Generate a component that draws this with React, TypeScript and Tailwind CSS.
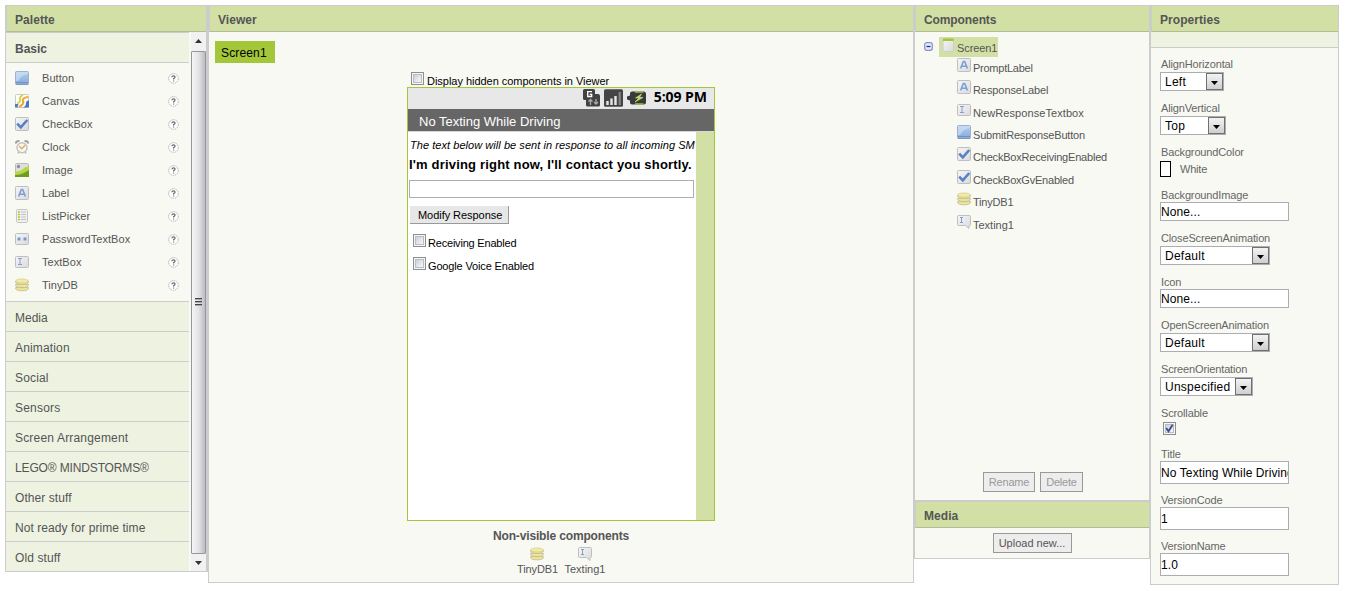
import React from "react";

type IconName = "button" | "canvas" | "checkbox" | "clock" | "image" | "label" | "list" | "password" | "textbox" | "db" | "texting" | "screen";

function Icon({ name, className = "" }: { name: IconName; className?: string }) {
  const plate = (y: number, h: number) => (
    <rect x=".5" y={y + 0.5} width="13" height={h - 1} rx="1" fill="url(#plate)" stroke="#bfbfc2" />
  );
  return (
    <svg width="14" height="14" viewBox="0 0 14 14" className={`block shrink-0 ${className}`}>
      {name === "button" && (
        <>
          <rect x=".5" y=".5" width="13" height="13" rx="1" fill="url(#blue)" stroke="#9db0cc" />
          <path d="M1 1h12v2Q6 4 3 10H1Z" fill="#d3e3f6" opacity=".6" />
          <path d="M1 11.5h12" stroke="#6f93c4" />
          <path d="M1 13.5h12" stroke="#8199c0" />
        </>
      )}
      {name === "canvas" && (
        <>
          <rect x=".5" y=".5" width="13" height="13" rx="1" fill="#fdfdfb" stroke="#c9ccca" />
          <path d="M2 9.500Q6 8 5 5.500T8 1" fill="none" stroke="#d0d63c" strokeWidth="1.800" />
          <path d="M4 13Q9.500 10 8 7T13 3" fill="none" stroke="#f2a83b" strokeWidth="2.200" />
          <path d="M8 13.500Q11 12 11 9t3-2.500v7Z" fill="#4879bf" />
          <path d="M0 10h3.500l-1 3.500H0Z" fill="#4c80c6" />
        </>
      )}
      {name === "checkbox" && (
        <>
          {plate(0, 14)}
          <path d="M2.2 6.6 5.8 10.4 12.3 3" fill="none" stroke="#5582c3" strokeWidth="2.6" />
        </>
      )}
      {name === "clock" && (
        <>
          <path d="M.5 3.500Q1 .8 4.500 1M13.500 3.500Q13 .8 9.500 1" fill="none" stroke="#a0a2a4" strokeWidth="2" />
          <path d="M3 13.500l1-2M11 13.500l-1-2" stroke="#b8b8b8" strokeWidth="1.500" />
          <circle cx="7" cy="7.800" r="5" fill="#f6f6f4" stroke="#c2c2c2" strokeWidth="1.400" />
          <path d="M4.300 6.200 6.800 8.700 10 5.200" fill="none" stroke="#efa94c" strokeWidth="1.500" />
        </>
      )}
      {name === "image" && (
        <>
          <rect x=".5" y=".5" width="13" height="13" rx="1" fill="#dededf" stroke="#b9bcb7" />
          <circle cx="3.500" cy="3.500" r="1.700" fill="#8f9092" />
          <path d="M0 8.500Q5 9 8 6t6-2v9.500H0Z" fill="#b9d644" />
          <path d="M0 12Q7 12 14 7v7H0Z" fill="#6f9c1f" />
        </>
      )}
      {name === "label" && (
        <>
          {plate(0, 14)}
          <path d="M3.600 10.500 6.300 3.500H7.700L10.400 10.500M4.800 8.300H9.200" fill="none" stroke="#7c9fd3" strokeWidth="1.600" />
        </>
      )}
      {name === "list" && (
        <>
          <rect x="1.500" y=".5" width="11" height="13" rx="1" fill="#f0f0ee" stroke="#c6c6c4" />
          <path d="M3 3h2M3 5.500h2M3 8h2M3 10.500h2" stroke="#a9c93c" strokeWidth="1.400" />
          <path d="M6 3h5M6 5.500h5M6 8h5M6 10.500h5" stroke="#c2c2c2" />
        </>
      )}
      {name === "password" && (
        <>
          {plate(1, 12)}
          <path d="M2 7h4M4 5v4M2.700 5.700 5.300 8.300M5.300 5.700 2.700 8.300M8 7h4M10 5v4M8.700 5.700l2.600 2.600M11.300 5.700 8.700 8.300" stroke="#7195cc" strokeWidth=".9" />
        </>
      )}
      {name === "textbox" && (
        <>
          {plate(1, 12)}
          <path d="M3 3.500h4M5 3.500v6M3 9.500h4" stroke="#869fc9" />
        </>
      )}
      {name === "db" && (
        <g fill="#efe695" stroke="#bdb89a" strokeWidth=".8">
          <path d="M.6 9.600v1Q1.300 12.800 7 12.800t6.400-2.200v-1Z" />
          <path d="M.6 6.400v1Q1.300 9.600 7 9.600t6.400-2.200v-1Z" />
          <path d="M.6 3.200v1Q1.300 6.400 7 6.400t6.400-2.200v-1Z" />
          <ellipse cx="7" cy="3" rx="6.300" ry="2" fill="#f3eca0" stroke="#d3cc96" />
        </g>
      )}
      {name === "texting" && (
        <>
          <path d="M1.500.5h11q1 0 1 1v8q0 1-1 1H12V13.500L8.500 10.500h-7q-1 0-1-1v-8q0-1 1-1Z" fill="url(#plate)" stroke="#bfbfc2" />
          <path d="M3 2.500h3M4.500 2.500v5M3 7.500h3" stroke="#869fc9" />
        </>
      )}
      {name === "screen" && (
        <>
          <rect x="2" y="1" width="10.500" height="12.500" rx="1" fill="url(#plate)" stroke="#cdd0c4" />
          <path d="M2 .5h10.500v2.500H2Z" fill="#a4c63c" />
        </>
      )}
    </svg>
  );
}

const Defs = () => (
  <svg width="0" height="0" className="absolute">
    <defs>
      <linearGradient id="plate" x1="0" y1="0" x2="1" y2="1">
        <stop offset="0" stopColor="#f6f6f7" />
        <stop offset="1" stopColor="#d9dadd" />
      </linearGradient>
      <linearGradient id="blue" x1="0" y1="0" x2="0" y2="1">
        <stop offset="0" stopColor="#b7d0ee" />
        <stop offset="1" stopColor="#83a9d9" />
      </linearGradient>
    </defs>
  </svg>
);

const Help = () => (
  <svg width="11" height="11" viewBox="0 0 11 11" className="-mt-[1px] block">
    <circle cx="5.5" cy="5.5" r="4.8" fill="#fff" stroke="#b4b4b4" strokeDasharray="1.5 .7" />
    <path d="M3.9 4.2Q4 2.8 5.5 2.8T7.1 4.1Q7.1 5 5.6 5.6V6.6M5.6 7.4v1.2" fill="none" stroke="#6b6b6b" strokeWidth="1.2" />
  </svg>
);

function Header({ children, className = "tracking-[0.05px]" }: { children: React.ReactNode; className?: string }) {
  return (
    <div className={`flex h-[26px] shrink-0 items-center border-b border-l border-b-[#b3bb94] border-l-[#cccccc] bg-[#d2e0a6] pt-[2px] pl-[8px] text-[12px] font-bold text-[#555] ${className}`}>
      {children}
    </div>
  );
}

function CheckBox({ checked = false }: { checked?: boolean }) {
  return (
    <div className="flex h-[13px] w-[13px] shrink-0 items-center justify-center border border-[#8e8f8f] bg-[#f6f6f6]">
      <div className="flex h-[9px] w-[9px] items-center justify-center border border-[#b8bcc4] bg-linear-to-br from-[#cbd0d8] to-[#f8f8f9]">
        {checked && (
          <svg width="9" height="9" viewBox="0 0 9 9" className="block shrink-0">
            <path d="M1.2 4 3.5 7.2 7.6 .8" fill="none" stroke="#3d4f93" strokeWidth="1.9" />
          </svg>
        )}
      </div>
    </div>
  );
}

const paletteItems: [IconName, string][] = [
  ["button", "Button"],
  ["canvas", "Canvas"],
  ["checkbox", "CheckBox"],
  ["clock", "Clock"],
  ["image", "Image"],
  ["label", "Label"],
  ["list", "ListPicker"],
  ["password", "PasswordTextBox"],
  ["textbox", "TextBox"],
  ["db", "TinyDB"],
];

const drawers: [string, string][] = [
  ["Media", "tracking-[0px]"],
  ["Animation", "tracking-[0.15px]"],
  ["Social", "tracking-[0.15px]"],
  ["Sensors", "tracking-[0.2px]"],
  ["Screen Arrangement", "tracking-[0.18px]"],
  ["LEGO® MINDSTORMS®", "tracking-[-0.14px]"],
  ["Other stuff", "tracking-[0.07px]"],
  ["Not ready for prime time", "tracking-[0.07px]"],
  ["Old stuff", "tracking-[0.1px]"],
];

function Palette() {
  return (
    <section className="flex h-[567px] w-[203px] flex-col border border-r-2 border-[#cccccc] bg-[#f8f9f3]">
      <Header>Palette</Header>
      <div className="flex min-h-0 flex-1">
        <div className="w-[183px] shrink-0">
          <div className="flex h-[30px] items-center border-t border-[#cccccc] bg-[#edf2e1] pt-[2px] pl-[9px] text-[12px] font-bold text-[#555]">Basic</div>
          <div className="h-[239px] border-t border-[#cccccc] pt-[4px]">
            {paletteItems.map(([icon, name]) => (
              <div key={name} className="flex h-[23px] items-center pr-[10px] pl-[9px] text-[11px] tracking-[0.05px] text-[#555]">
                <Icon name={icon} className="-mt-[1px]" />
                <span className="flex-1 pl-[13px]">{name}</span>
                <Help />
              </div>
            ))}
          </div>
          {drawers.map(([name, tracking]) => (
            <div key={name} className={`flex h-[30px] items-center border-t border-[#cccccc] bg-[#edf2e1] pt-[3px] pl-[9px] text-[12px] text-[#555] ${tracking}`}>
              {name}
            </div>
          ))}
        </div>
        <div className="ml-[2px] flex w-[15px] flex-col bg-[#f1f1f1]">
          <svg width="15" height="19" viewBox="0 0 15 19" className="block">
            <path d="M4 11 7.5 7 11 11Z" fill="#333" />
          </svg>
          <div className="flex flex-1 items-center justify-center rounded-[1px] border border-[#97979b] bg-linear-to-r from-[#f6f6f7] via-[#e3e3e6] to-[#bcbdc4]">
            <svg width="7" height="8" viewBox="0 0 7 8" className="-mt-[2px] block">
              <path d="M0 .5h7M0 3.5h7M0 6.5h7" stroke="#444" />
              <path d="M0 1.5h7M0 4.5h7M0 7.5h7" stroke="#aaa" />
            </svg>
          </div>
          <svg width="15" height="17" viewBox="0 0 15 17" className="block">
            <path d="M4 7 7.5 11 11 7Z" fill="#333" />
          </svg>
        </div>
      </div>
    </section>
  );
}

function StatusIcons() {
  return (
    <svg width="65" height="20" viewBox="0 0 65 20" className="block shrink-0">
      <path d="M1 1.5Q1 0 2.5 0h9Q13 0 13 1.5V5h3q2 0 2 2v9q0 1.500-1.500 1.500h-11Q4 17.500 4 16V11H2.500Q1 11 1 9.500Z" fill="#424242" />
      <path d="M10 2.700H5.700V7.500h4V5.300H7.700" fill="none" stroke="#fff" strokeWidth="1.300" />
      <path d="M8.500 16v-5M6.500 12.500l2-2 2 2M14 10v5M12 13l2 2 2-2" fill="none" stroke="#aaa" strokeWidth="1.300" />
      <rect x="22" y=".3" width="19" height="17.500" rx="1.500" fill="#454545" />
      <path d="M25.500 16v-4M29.500 16v-6.500M33.500 16V7" stroke="#e8e8e8" strokeWidth="2.400" />
      <path d="M37.700 16V3" stroke="#858585" strokeWidth="2.200" />
      <path d="M45 7.500 48 6.500V4.500q0-2 2-2h11.500q2.500 0 2.500 2.500V13q0 2.500-2.500 2.500H50Q48 15.500 48 13.500V11.500L45 10.500Z" fill="#3a3a3a" />
      <path d="M53 3h8.500M53 15h8.500" stroke="#9bc23c" strokeWidth="1.300" />
      <path d="M59.500 5 53.500 9h3.500L53 13 61 8.500H57.500Z" fill="#b4da49" stroke="#e4f2b4" strokeWidth=".5" />
    </svg>
  );
}

function Viewer() {
  return (
    <section className="flex h-[578px] w-[706px] flex-col border border-[#cccccc] bg-[#f8f9f3]">
      <Header>Viewer</Header>
      <div className="mt-[9px] ml-[6px] flex h-[22px] w-[60px] items-center bg-[#a4c639] pt-[2px] pl-[6px] text-[12px] tracking-[0.15px] text-black">Screen1</div>
      <div className="mt-[9px] ml-[202px] flex h-[15px] text-[11px] leading-[16px] text-black">
        <CheckBox />
        <span className="pt-[1px] pl-[3px] tracking-[-0.03px] whitespace-nowrap">Display hidden components in Viewer</span>
      </div>
      <div className="ml-[198px] flex h-[434px] w-[308px] shrink-0 flex-col border border-[#a4c639] bg-white">
        <div className="flex h-[21px] shrink-0 items-center justify-end bg-[#e8e8e8] pr-[7px]">
          <StatusIcons />
          <span className="-mt-[3px] w-[60px] text-right font-['Open_Sans',sans-serif] text-[14px] leading-[20px] font-bold tracking-[-0.05px] whitespace-nowrap text-black">5:09 PM</span>
        </div>
        <div className="flex h-[22px] shrink-0 items-center bg-[#666666] pt-[3px] pl-[11px] text-[13px] whitespace-nowrap text-white">No Texting While Driving</div>
        <div className="flex min-h-0 flex-1 border-t border-[#d8d8d8]">
          <div className="w-[288px] pl-[1px] whitespace-nowrap text-black">
            <div className="mt-[5px] h-[16px] pl-[1px] text-[11px] leading-[16px] tracking-[0.05px] italic">The text below will be sent in response to all incoming SM</div>
            <div className="mt-[2px] h-[20px] text-[13px] leading-[20px] font-bold tracking-[0.18px]">I'm driving right now, I'll contact you shortly.</div>
            <div className="mt-[5px] h-[18px] w-[285px] border border-[#abadb3]" />
            <div className="mt-[8px] ml-[1px] flex h-[18px] w-[99px] items-center border-r border-b border-[#999] bg-[#e7e7e7] pt-[1px] pl-[8px] text-[11px] tracking-[-0.05px]">Modify Response</div>
            <div className="mt-[10px] ml-[4px] flex h-[23px] text-[11px] leading-[16px] tracking-[-0.2px]">
              <CheckBox />
              <span className="pt-[1px] pl-[2px]">Receiving Enabled</span>
            </div>
            <div className="ml-[4px] flex h-[23px] text-[11px] leading-[16px] tracking-[-0.15px]">
              <CheckBox />
              <span className="pt-[1px] pl-[2px]">Google Voice Enabled</span>
            </div>
          </div>
          <div className="flex-1 bg-[#d2e0a6]" />
        </div>
      </div>
      <div className="mt-[7px] ml-[198px] w-[308px] text-center text-[12px] leading-[16px] font-bold tracking-[-0.15px] text-[#555]">Non-visible components</div>
      <div className="mt-[3px] ml-[308px] flex gap-[6px] text-[11px] leading-[14px] text-[#555]">
        <div className="flex w-[41px] flex-col items-center gap-[1px]">
          <Icon name="db" className="-ml-[1px]" />
          <span className="tracking-[-0.1px]">TinyDB1</span>
        </div>
        <div className="flex w-[42px] flex-col items-center gap-[1px]">
          <Icon name="texting" className="-ml-[1px]" />
          <span>Texting1</span>
        </div>
      </div>
    </section>
  );
}

function SmallButton({ className, children }: { className: string; children: React.ReactNode }) {
  return <div className={`flex h-[20px] items-center justify-center border border-[#999] bg-[#ededed] pt-[1px] text-[11px] whitespace-nowrap ${className}`}>{children}</div>;
}

const tree: [IconName, string, string][] = [
  ["label", "PromptLabel", "h-[22px] tracking-[-0.25px]"],
  ["label", "ResponseLabel", "h-[23px] tracking-[-0.08px]"],
  ["textbox", "NewResponseTextbox", "h-[22px] tracking-[0.08px]"],
  ["button", "SubmitResponseButton", "h-[22px] tracking-[-0.18px]"],
  ["checkbox", "CheckBoxReceivingEnabled", "h-[23px] tracking-[-0.2px]"],
  ["checkbox", "CheckBoxGvEnabled", "h-[22px] tracking-[-0.22px]"],
  ["db", "TinyDB1", "h-[23px] tracking-[-0.2px]"],
  ["texting", "Texting1", "h-[22px] tracking-[0px]"],
];

function Components() {
  return (
    <section className="flex h-[554px] w-[236px] flex-col border border-[#cccccc] bg-[#f8f9f3] text-[#555]">
      <Header className="tracking-[-0.1px]">Components</Header>
      <div className="flex h-[460px] shrink-0 flex-col pt-[5px] text-[11px]">
        <div className="flex h-[21px] pl-[9px]">
          <svg width="10" height="10" viewBox="0 0 10 10" className="mt-[5px] block">
            <rect x=".7" y=".7" width="7.600" height="7.600" rx="2" fill="#e6eaf6" stroke="#8492cc" strokeWidth="1.200" />
            <path d="M2.500 4.500h4" stroke="#1e2f9c" strokeWidth="1.300" />
          </svg>
          <div className="ml-[5px] flex h-[20px] w-[59px] bg-[#d2e0a6] pl-[2px] leading-[16px]">
            <Icon name="screen" className="mt-[1px]" />
            <span className="pt-[3px] pl-[2px] tracking-[-0.1px]">Screen1</span>
          </div>
        </div>
        {tree.map(([icon, name, row]) => (
          <div key={name} className={`flex pl-[42px] leading-[16px] ${row}`}>
            <Icon name={icon} />
            <span className="pt-[2px] pl-[2px]">{name}</span>
          </div>
        ))}
        <div className="mt-auto flex gap-[5px] pl-[68px] text-[#999]">
          <SmallButton className="w-[52px] tracking-[-0.2px]">Rename</SmallButton>
          <SmallButton className="w-[43px] tracking-[-0.2px]">Delete</SmallButton>
        </div>
      </div>
      <div className="mt-[8px] h-[2px] shrink-0 bg-[#cccccc]" />
      <Header>Media</Header>
      <div className="flex justify-center pt-[5px]">
        <SmallButton className="w-[79px]">Upload new...</SmallButton>
      </div>
    </section>
  );
}

function Field({ label, className, labelClass = "h-[15px]", children }: { label: string; className: string; labelClass?: string; children: React.ReactNode }) {
  return (
    <div className={`shrink-0 ${className}`}>
      <div className={`pl-[1px] text-[11px] leading-[14px] tracking-[-0.14px] text-[#666] ${labelClass}`}>{label}</div>
      {children}
    </div>
  );
}

function Select({ value, className }: { value: string; className: string }) {
  return (
    <div className={`flex h-[19px] justify-between border border-[#abadb3] bg-white text-[12px] leading-[19px] text-black ${className}`}>
      <span className="pl-[4px] tracking-[0.25px]">{value}</span>
      <div className="flex h-[17px] w-[17px] items-center justify-center border border-[#707070] bg-linear-to-b from-[#f3f3f3] to-[#cfcfcf]">
        <svg width="7" height="4" viewBox="0 0 7 4" className="mt-[2px] block">
          <path d="M0 0h7L3.500 4Z" fill="#000" />
        </svg>
      </div>
    </div>
  );
}

function Input({ value, className }: { value: string; className: string }) {
  return <div className={`flex w-[129px] items-center overflow-hidden border border-[#abadb3] bg-white text-[12px] tracking-[0.1px] whitespace-nowrap text-black ${className}`}>{value}</div>;
}

function Properties() {
  return (
    <section className="flex h-[580px] w-[189px] flex-col border border-[#cccccc] bg-[#f8f9f3]">
      <Header>Properties</Header>
      <div className="h-[16px] shrink-0 border-b border-[#cccccc] bg-[#edf2e1]" />
      <div className="flex flex-col pt-[9px] pl-[9px]">
        <Field label="AlignHorizontal" className="h-[44px]"><Select value="Left" className="w-[64px]" /></Field>
        <Field label="AlignVertical" className="h-[44px]"><Select value="Top" className="w-[66px]" /></Field>
        <Field label="BackgroundColor" className="h-[43px]" labelClass="h-[16px]">
          <div className="flex items-center">
            <div className="h-[16px] w-[11px] border border-black bg-white" />
            <span className="pl-[9px] text-[11px] leading-[16px] tracking-[-0.2px] text-[#666]">White</span>
          </div>
        </Field>
        <Field label="BackgroundImage" className="h-[43px]" labelClass="h-[14px]"><Input value="None..." className="h-[19px]" /></Field>
        <Field label="CloseScreenAnimation" className="h-[44px]"><Select value="Default" className="w-[110px]" /></Field>
        <Field label="Icon" className="h-[43px]" labelClass="h-[14px]"><Input value="None..." className="h-[19px]" /></Field>
        <Field label="OpenScreenAnimation" className="h-[44px]"><Select value="Default" className="w-[110px]" /></Field>
        <Field label="ScreenOrientation" className="h-[44px]"><Select value="Unspecified" className="w-[93px]" /></Field>
        <Field label="Scrollable" className="h-[41px]" labelClass="h-[16px]"><div className="pl-[3px]"><CheckBox checked /></div></Field>
        <Field label="Title" className="h-[46px]" labelClass="h-[14px]"><Input value="No Texting While Driving" className="h-[23px]" /></Field>
        <Field label="VersionCode" className="h-[46px]" labelClass="h-[14px]"><Input value="1" className="h-[23px] pt-[1px]" /></Field>
        <Field label="VersionName" className="h-[37px]" labelClass="h-[14px]"><Input value="1.0" className="h-[23px]" /></Field>
      </div>
    </section>
  );
}

export default function App() {
  return (
    <main className="flex h-[591px] w-[1345px] items-start overflow-hidden bg-white pt-[5px] pl-[5px] font-['Liberation_Sans',Arial,sans-serif]">
      <Defs />
      <Palette />
      <Viewer />
      <Components />
      <Properties />
    </main>
  );
}
